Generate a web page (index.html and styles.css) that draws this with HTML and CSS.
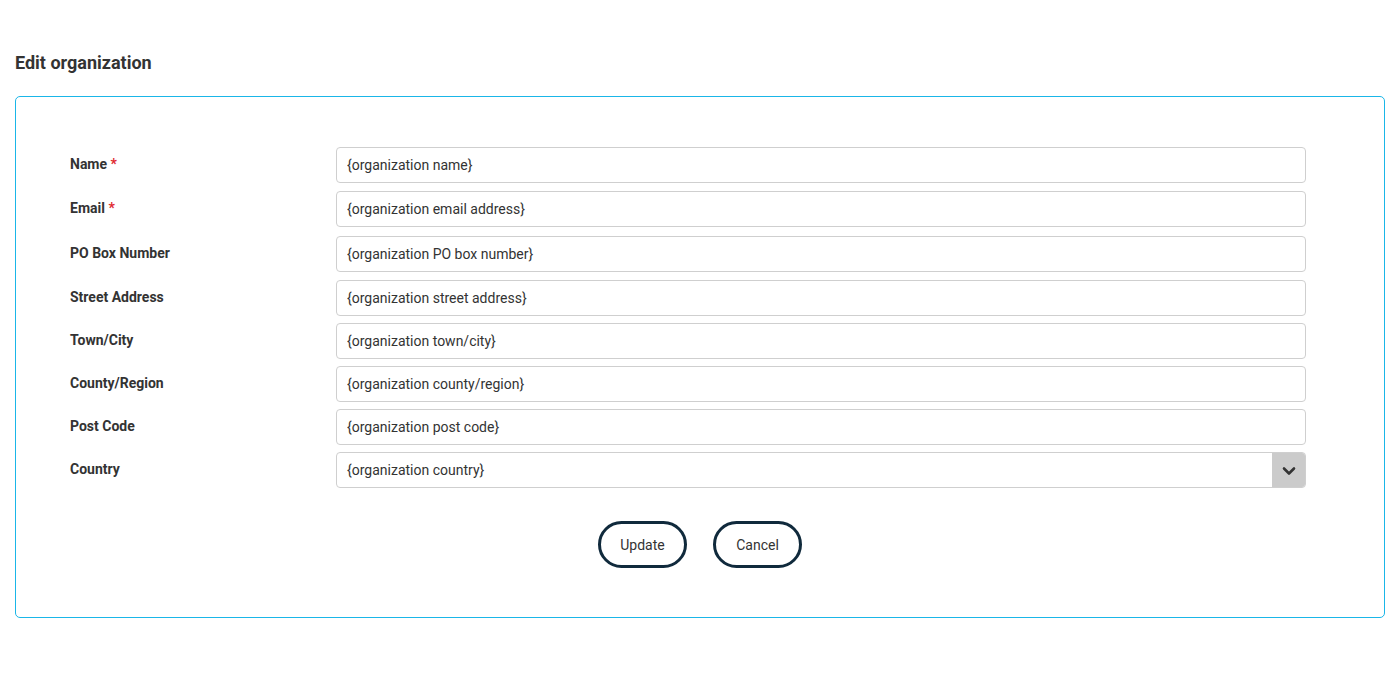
FILE: index.html
```html
<!DOCTYPE html>
<html>
<head>
<meta charset="utf-8">
<link rel="stylesheet" href="styles.css">
</head>
<body>
<h1 class="title">Edit organization</h1>
<div class="card">
  <form class="form">
    <div class="row row-wide">
      <label class="label">Name <span class="req">*</span></label>
      <div class="field"><input class="input" value="{organization name}"></div>
    </div>
    <div class="row row-wider">
      <label class="label">Email <span class="req">*</span></label>
      <div class="field"><input class="input" value="{organization email address}"></div>
    </div>
    <div class="row row-wide">
      <label class="label">PO Box Number</label>
      <div class="field"><input class="input" value="{organization PO box number}"></div>
    </div>
    <div class="row">
      <label class="label">Street Address</label>
      <div class="field"><input class="input" value="{organization street address}"></div>
    </div>
    <div class="row">
      <label class="label">Town/City</label>
      <div class="field"><input class="input" value="{organization town/city}"></div>
    </div>
    <div class="row">
      <label class="label">County/Region</label>
      <div class="field"><input class="input" value="{organization county/region}"></div>
    </div>
    <div class="row">
      <label class="label">Post Code</label>
      <div class="field"><input class="input" value="{organization post code}"></div>
    </div>
    <div class="row row-last">
      <label class="label">Country</label>
      <div class="field">
        <div class="select">
          <span class="select-value">{organization country}</span>
          <span class="select-arrow">
            <svg width="14" height="10" viewBox="0 0 14 10"><path d="M2 2.5 L7 7.5 L12 2.5" fill="none" stroke="#333" stroke-width="2.6" stroke-linecap="round" stroke-linejoin="round"/></svg>
          </span>
        </div>
      </div>
    </div>
    <div class="actions">
      <button type="button" class="btn">Update</button>
      <button type="button" class="btn">Cancel</button>
    </div>
  </form>
</div>
</body>
</html>
```

FILE: styles.css
```css
* { box-sizing: border-box; }
body {
  margin: 0;
  font-family: Roboto, "Liberation Sans", Arial, sans-serif;
  color: #333;
  background: #fff;
}
.title {
  margin: 0;
  padding: 52px 0 0 15px;
  font-size: 18px;
  font-weight: 700;
  line-height: 21px;
  color: #333;
}
.card {
  margin: 23px 15px 0 15px;
  border: 1px solid #1ab6e8;
  border-radius: 5px;
  padding: 50px 78px 49px 54px;
}
.form { display: flex; flex-direction: column; }
.row {
  display: flex;
  align-items: flex-start;
  margin-bottom: 7px;
}
.row-wide { margin-bottom: 8px; }
.row-wider { margin-bottom: 9px; }
.row-last { margin-bottom: 33px; }
.label {
  width: 266px;
  flex: none;
  font-size: 14px;
  font-weight: 700;
  line-height: 16px;
  padding-top: 9px;
  color: #333;
}
.req { color: #e0282e; }
.field { flex: 1; }
.input, .select {
  width: 100%;
  height: 36px;
  border: 1px solid #cfcfcf;
  border-radius: 4px;
  padding: 0 10px;
  font-family: Roboto, "Liberation Sans", Arial, sans-serif;
  font-size: 14px;
  color: #333;
  background: #fff;
  outline: none;
}
.select {
  display: flex;
  align-items: center;
  padding-right: 0;
  overflow: hidden;
}
.select-value { flex: 1; }
.select-arrow {
  width: 33px;
  height: 100%;
  background: #cbcbcb;
  display: flex;
  align-items: center;
  justify-content: center;
  padding-top: 2px;
}
.actions {
  display: flex;
  justify-content: center;
  gap: 26px;
  margin: 0 -78px 0 -54px;
}
.btn {
  width: 89px;
  height: 47px;
  border: 3px solid #102a3c;
  border-radius: 24px;
  background: #fff;
  font-family: Roboto, "Liberation Sans", Arial, sans-serif;
  font-size: 14px;
  color: #333;
  padding: 0;
  cursor: pointer;
}
```
